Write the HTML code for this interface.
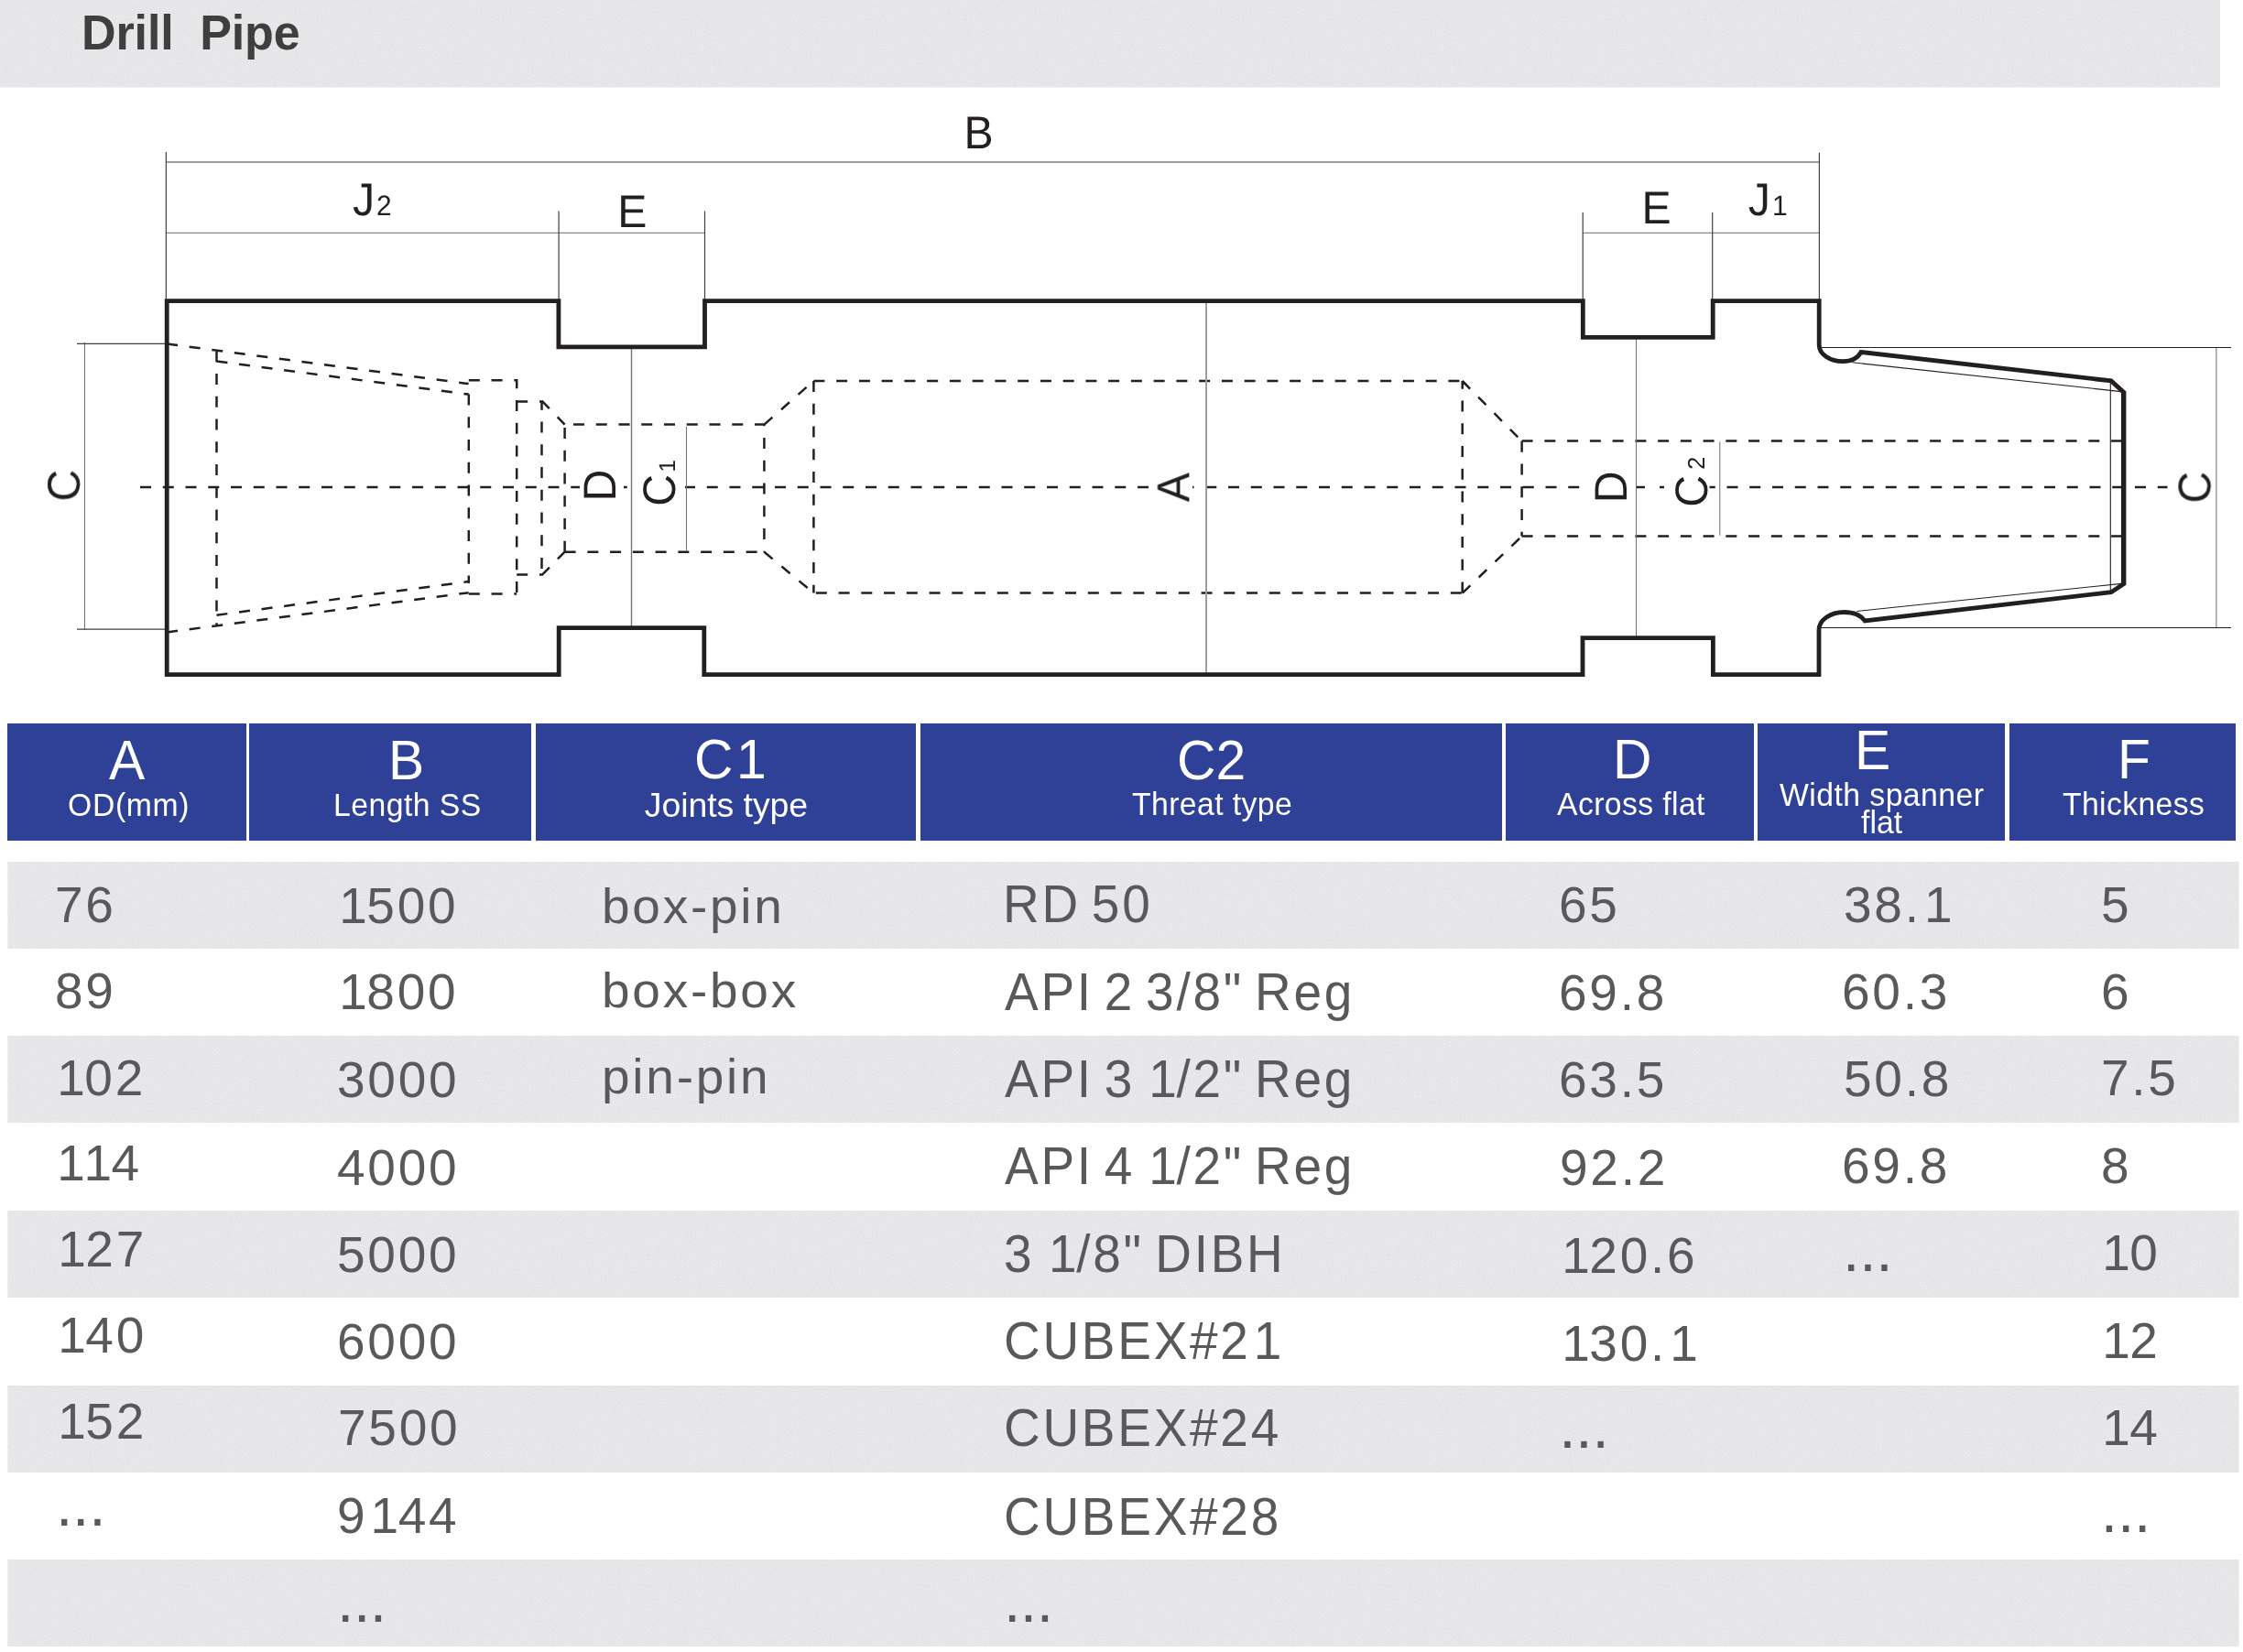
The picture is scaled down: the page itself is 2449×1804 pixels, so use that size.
<!DOCTYPE html>
<html lang="en"><head><meta charset="utf-8"><title>Drill Pipe</title>
<style>
html,body{margin:0;padding:0;background:#fff;width:2449px;height:1804px}
body{position:relative;font-family:"Liberation Sans",sans-serif;color:#58595b}
.t{position:absolute;line-height:1;white-space:pre;transform-origin:0 0}
.t i{font-style:normal;position:relative;left:.058em}
.band,.row{background:#e6e6e8}
.band{position:absolute;left:0;top:0;width:2424px;height:95px;border-bottom:1px solid #f3f3f4}
.hc{position:absolute;top:790px;height:128px;background:#2e4197}
.row{position:absolute;left:8px;width:2435px;border-left:1px solid #ededef;border-right:1px solid #f1f1f2}
svg{position:absolute;left:0;top:0}
svg text{font-family:"Liberation Sans",sans-serif;fill:#231f20;text-rendering:geometricPrecision}
.k{fill:none;stroke:#231f20;stroke-width:4.8;stroke-linejoin:miter;stroke-miterlimit:10}
.d{fill:none;stroke:#231f20;stroke-width:2.5;stroke-dasharray:12 12.75}
.g1{fill:none;stroke:#9c9ea2;stroke-width:2}
.g2{fill:none;stroke:#737373;stroke-width:1.05}
.gb{fill:none;stroke:#868a96;stroke-width:1.25}
.g3{fill:none;stroke:#414042;stroke-width:1.2}
.n{fill:none;stroke:#231f20;stroke-width:1.1}
#sheet{position:absolute;left:0;top:0;width:2449px;height:1804px;overflow:hidden;opacity:.999}
</style></head><body><div id="sheet">
<div class="band"></div>

<div class="row" style="top:941px;height:95.0px"></div>
<div class="row" style="top:1131px;height:95.0px"></div>
<div class="row" style="top:1322px;height:95.0px"></div>
<div class="row" style="top:1513px;height:95.0px"></div>
<div class="row" style="top:1703px;height:95.0px"></div>
<svg width="2449" height="1804" viewBox="0 0 2449 1804" shape-rendering="crispEdges"><defs><pattern id="dots" width="101" height="101" patternUnits="userSpaceOnUse"><g fill="#f0f0f1"><path d="M57,71h1v1h-1zM99,59h1v1h-1zM57,65h1v1h-1zM75,24h1v1h-1zM23,65h1v1h-1zM60,80h1v1h-1zM78,23h1v1h-1zM12,57h1v1h-1zM38,18h1v1h-1zM11,68h1v1h-1zM88,81h1v1h-1zM5,76h1v1h-1zM50,57h1v1h-1zM83,94h1v1h-1zM78,83h1v1h-1zM20,79h1v1h-1zM1,67h1v1h-1zM8,7h1v1h-1zM4,24h1v1h-1zM30,76h1v1h-1zM3,99h1v1h-1zM59,41h1v1h-1zM56,75h1v1h-1zM29,81h1v1h-1zM37,63h1v1h-1zM0,84h1v1h-1zM83,35h1v1h-1zM52,70h1v1h-1zM10,90h1v1h-1zM32,40h1v1h-1zM97,29h1v1h-1zM65,36h1v1h-1zM3,8h1v1h-1zM72,98h1v1h-1zM13,51h1v1h-1zM13,37h1v1h-1zM49,8h1v1h-1zM2,87h1v1h-1zM0,27h1v1h-1zM26,6h1v1h-1zM60,48h1v1h-1zM90,50h1v1h-1zM53,9h1v1h-1zM72,80h1v1h-1zM25,99h1v1h-1zM86,34h1v1h-1zM43,11h1v1h-1zM39,42h1v1h-1zM1,52h1v1h-1zM97,15h1v1h-1zM17,31h1v1h-1zM90,12h1v1h-1zM59,62h1v1h-1zM22,87h1v1h-1zM71,24h1v1h-1zM24,93h1v1h-1zM53,82h1v1h-1zM49,14h1v1h-1zM50,53h1v1h-1zM27,0h1v1h-1zM34,75h1v1h-1zM38,2h1v1h-1zM26,23h1v1h-1zM50,77h1v1h-1zM82,73h1v1h-1zM12,5h1v1h-1zM18,27h1v1h-1zM56,33h1v1h-1zM78,42h1v1h-1zM37,49h1v1h-1zM11,26h1v1h-1zM31,1h1v1h-1zM76,47h1v1h-1zM47,79h1v1h-1zM58,16h1v1h-1zM75,61h1v1h-1zM73,17h1v1h-1zM49,23h1v1h-1zM80,19h1v1h-1zM39,29h1v1h-1zM78,31h1v1h-1zM92,24h1v1h-1zM20,94h1v1h-1zM80,70h1v1h-1zM25,87h1v1h-1zM49,61h1v1h-1zM77,10h1v1h-1zM53,6h1v1h-1zM13,13h1v1h-1zM4,65h1v1h-1zM32,30h1v1h-1zM94,90h1v1h-1zM50,32h1v1h-1zM53,76h1v1h-1zM62,37h1v1h-1zM66,22h1v1h-1zM92,8h1v1h-1zM61,71h1v1h-1zM83,78h1v1h-1zM35,27h1v1h-1zM26,95h1v1h-1zM34,52h1v1h-1zM22,36h1v1h-1zM47,67h1v1h-1zM11,46h1v1h-1zM17,57h1v1h-1zM42,84h1v1h-1zM66,74h1v1h-1zM17,75h1v1h-1zM4,2h1v1h-1zM60,45h1v1h-1zM89,39h1v1h-1zM76,81h1v1h-1zM9,61h1v1h-1zM8,93h1v1h-1zM17,9h1v1h-1zM9,57h1v1h-1zM69,47h1v1h-1zM94,5h1v1h-1zM94,94h1v1h-1zM90,16h1v1h-1zM43,45h1v1h-1zM10,87h1v1h-1zM60,9h1v1h-1zM53,3h1v1h-1zM63,73h1v1h-1zM1,79h1v1h-1zM84,48h1v1h-1zM48,74h1v1h-1zM9,10h1v1h-1zM11,81h1v1h-1zM14,32h1v1h-1zM53,93h1v1h-1zM42,49h1v1h-1zM74,58h1v1h-1zM56,59h1v1h-1zM69,10h1v1h-1zM66,96h1v1h-1zM65,3h1v1h-1zM39,76h1v1h-1zM2,29h1v1h-1zM63,99h1v1h-1zM62,32h1v1h-1zM1,47h1v1h-1zM86,78h1v1h-1zM51,85h1v1h-1zM32,25h1v1h-1zM81,55h1v1h-1zM96,25h1v1h-1zM27,49h1v1h-1zM28,74h1v1h-1zM40,26h1v1h-1zM17,17h1v1h-1zM63,44h1v1h-1zM5,91h1v1h-1zM8,35h1v1h-1zM21,14h1v1h-1zM52,48h1v1h-1zM80,66h1v1h-1zM63,86h1v1h-1zM40,91h1v1h-1zM79,57h1v1h-1zM41,9h1v1h-1zM4,35h1v1h-1zM77,5h1v1h-1zM86,90h1v1h-1zM45,39h1v1h-1zM2,82h1v1h-1zM17,51h1v1h-1zM58,24h1v1h-1zM99,18h1v1h-1zM6,80h1v1h-1zM68,83h1v1h-1zM81,47h1v1h-1zM22,91h1v1h-1zM1,96h1v1h-1zM60,68h1v1h-1zM91,4h1v1h-1zM22,28h1v1h-1zM34,99h1v1h-1zM44,69h1v1h-1zM89,66h1v1h-1zM64,78h1v1h-1zM96,20h1v1h-1zM50,89h1v1h-1zM28,11h1v1h-1zM25,80h1v1h-1zM70,72h1v1h-1zM83,64h1v1h-1zM43,59h1v1h-1zM92,82h1v1h-1zM27,31h1v1h-1zM49,11h1v1h-1zM39,68h1v1h-1zM41,33h1v1h-1zM44,64h1v1h-1zM56,43h1v1h-1zM70,53h1v1h-1zM98,35h1v1h-1zM62,3h1v1h-1zM22,68h1v1h-1zM42,87h1v1h-1zM60,19h1v1h-1zM66,92h1v1h-1zM66,86h1v1h-1zM88,56h1v1h-1zM71,37h1v1h-1zM93,71h1v1h-1zM66,65h1v1h-1zM71,32h1v1h-1zM39,85h1v1h-1zM26,38h1v1h-1zM18,69h1v1h-1zM67,34h1v1h-1zM73,63h1v1h-1zM25,52h1v1h-1zM68,14h1v1h-1zM62,11h1v1h-1zM88,21h1v1h-1zM8,68h1v1h-1zM58,52h1v1h-1zM31,60h1v1h-1zM63,16h1v1h-1zM43,55h1v1h-1zM40,13h1v1h-1zM79,3h1v1h-1zM33,16h1v1h-1zM89,99h1v1h-1zM2,4h1v1h-1zM24,19h1v1h-1zM45,31h1v1h-1zM79,63h1v1h-1zM13,63h1v1h-1zM93,74h1v1h-1zM15,65h1v1h-1zM52,67h1v1h-1zM68,26h1v1h-1zM81,27h1v1h-1zM69,78h1v1h-1zM29,94h1v1h-1zM80,44h1v1h-1zM23,40h1v1h-1zM99,24h1v1h-1zM12,17h1v1h-1zM30,16h1v1h-1zM93,11h1v1h-1zM33,49h1v1h-1zM80,87h1v1h-1zM2,12h1v1h-1zM25,72h1v1h-1zM87,45h1v1h-1zM46,14h1v1h-1zM81,97h1v1h-1zM87,24h1v1h-1zM14,26h1v1h-1zM36,86h1v1h-1zM12,74h1v1h-1zM7,17h1v1h-1zM87,59h1v1h-1zM9,97h1v1h-1zM12,41h1v1h-1zM54,65h1v1h-1zM26,76h1v1h-1zM47,1h1v1h-1zM94,47h1v1h-1zM1,41h1v1h-1zM80,51h1v1h-1zM72,76h1v1h-1zM74,43h1v1h-1zM35,14h1v1h-1zM51,17h1v1h-1zM98,55h1v1h-1zM51,26h1v1h-1zM9,43h1v1h-1zM38,60h1v1h-1zM12,1h1v1h-1zM45,81h1v1h-1zM29,34h1v1h-1zM85,38h1v1h-1zM43,27h1v1h-1zM84,51h1v1h-1zM49,65h1v1h-1zM63,82h1v1h-1zM27,89h1v1h-1zM15,97h1v1h-1zM78,13h1v1h-1zM94,30h1v1h-1zM32,56h1v1h-1zM6,97h1v1h-1zM32,35h1v1h-1zM69,65h1v1h-1zM72,12h1v1h-1zM82,9h1v1h-1zM85,97h1v1h-1zM5,49h1v1h-1zM20,49h1v1h-1zM63,69h1v1h-1zM78,76h1v1h-1zM7,54h1v1h-1zM63,53h1v1h-1zM36,67h1v1h-1zM39,46h1v1h-1zM34,71h1v1h-1zM91,95h1v1h-1zM20,52h1v1h-1zM96,87h1v1h-1zM40,95h1v1h-1zM74,92h1v1h-1zM28,54h1v1h-1zM92,61h1v1h-1zM32,96h1v1h-1zM31,5h1v1h-1zM66,12h1v1h-1zM77,90h1v1h-1zM46,56h1v1h-1zM17,85h1v1h-1zM53,58h1v1h-1zM76,33h1v1h-1zM87,53h1v1h-1zM46,99h1v1h-1zM95,67h1v1h-1zM17,37h1v1h-1zM93,16h1v1h-1zM39,100h1v1h-1zM45,35h1v1h-1zM34,78h1v1h-1zM72,89h1v1h-1zM24,31h1v1h-1zM7,1h1v1h-1zM34,33h1v1h-1zM26,43h1v1h-1zM9,15h1v1h-1zM57,79h1v1h-1zM98,98h1v1h-1zM19,83h1v1h-1zM37,70h1v1h-1zM97,95h1v1h-1zM23,54h1v1h-1zM59,38h1v1h-1zM99,1h1v1h-1zM9,39h1v1h-1zM27,84h1v1h-1zM63,92h1v1h-1zM41,36h1v1h-1zM45,84h1v1h-1zM92,41h1v1h-1zM76,87h1v1h-1zM35,56h1v1h-1zM67,39h1v1h-1zM31,10h1v1h-1zM46,46h1v1h-1zM74,49h1v1h-1zM72,47h1v1h-1zM49,69h1v1h-1zM22,11h1v1h-1zM28,66h1v1h-1zM20,72h1v1h-1zM8,74h1v1h-1zM100,69h1v1h-1zM83,18h1v1h-1zM12,95h1v1h-1zM31,91h1v1h-1zM28,62h1v1h-1zM43,97h1v1h-1zM17,63h1v1h-1zM90,79h1v1h-1zM5,52h1v1h-1zM44,0h1v1h-1zM90,1h1v1h-1zM48,87h1v1h-1zM37,35h1v1h-1zM58,2h1v1h-1zM4,40h1v1h-1zM23,45h1v1h-1zM76,65h1v1h-1zM96,39h1v1h-1zM70,61h1v1h-1zM33,62h1v1h-1zM51,43h1v1h-1zM84,70h1v1h-1zM98,11h1v1h-1zM61,28h1v1h-1zM27,17h1v1h-1zM66,99h1v1h-1zM7,84h1v1h-1zM91,53h1v1h-1zM77,20h1v1h-1zM53,20h1v1h-1zM98,41h1v1h-1zM66,16h1v1h-1zM79,34h1v1h-1zM66,68h1v1h-1zM22,0h1v1h-1zM61,88h1v1h-1zM56,26h1v1h-1zM4,69h1v1h-1zM63,20h1v1h-1zM39,51h1v1h-1zM9,71h1v1h-1zM8,46h1v1h-1zM17,13h1v1h-1zM95,100h1v1h-1zM15,83h1v1h-1zM48,91h1v1h-1zM30,37h1v1h-1zM58,98h1v1h-1zM1,92h1v1h-1zM69,95h1v1h-1zM96,50h1v1h-1zM71,85h1v1h-1zM11,32h1v1h-1zM24,25h1v1h-1zM80,90h1v1h-1zM22,23h1v1h-1zM4,59h1v1h-1zM55,52h1v1h-1zM52,79h1v1h-1zM100,31h1v1h-1zM56,13h1v1h-1zM20,32h1v1h-1zM29,45h1v1h-1zM91,90h1v1h-1zM84,25h1v1h-1zM53,89h1v1h-1zM42,42h1v1h-1zM34,59h1v1h-1zM30,72h1v1h-1zM69,69h1v1h-1zM71,8h1v1h-1zM42,76h1v1h-1zM0,36h1v1h-1zM76,70h1v1h-1zM20,25h1v1h-1zM4,18h1v1h-1zM67,49h1v1h-1zM15,72h1v1h-1zM42,6h1v1h-1zM82,100h1v1h-1zM85,100h1v1h-1zM13,60h1v1h-1zM44,52h1v1h-1zM52,96h1v1h-1zM52,55h1v1h-1zM42,67h1v1h-1zM66,55h1v1h-1zM37,92h1v1h-1zM75,8h1v1h-1zM64,50h1v1h-1zM67,30h1v1h-1zM93,85h1v1h-1zM37,31h1v1h-1zM93,38h1v1h-1zM22,8h1v1h-1zM18,45h1v1h-1zM88,74h1v1h-1zM88,7h1v1h-1zM2,22h1v1h-1zM25,34h1v1h-1zM30,64h1v1h-1zM84,67h1v1h-1zM38,23h1v1h-1zM85,28h1v1h-1zM67,5h1v1h-1zM0,76h1v1h-1zM75,36h1v1h-1zM54,72h1v1h-1zM11,21h1v1h-1zM36,96h1v1h-1zM19,4h1v1h-1zM96,74h1v1h-1zM63,7h1v1h-1zM76,99h1v1h-1zM14,77h1v1h-1zM55,30h1v1h-1zM85,56h1v1h-1zM92,33h1v1h-1zM14,22h1v1h-1zM79,94h1v1h-1zM31,20h1v1h-1zM46,89h1v1h-1zM62,96h1v1h-1zM95,58h1v1h-1zM30,52h1v1h-1zM60,54h1v1h-1zM9,4h1v1h-1zM78,27h1v1h-1zM51,74h1v1h-1zM94,43h1v1h-1zM6,27h1v1h-1zM70,20h1v1h-1zM60,57h1v1h-1zM6,88h1v1h-1zM35,46h1v1h-1zM33,65h1v1h-1zM83,91h1v1h-1zM46,17h1v1h-1zM98,66h1v1h-1zM85,7h1v1h-1zM16,4h1v1h-1zM57,85h1v1h-1zM66,45h1v1h-1zM44,78h1v1h-1zM95,80h1v1h-1zM84,85h1v1h-1zM54,15h1v1h-1zM90,35h1v1h-1zM28,20h1v1h-1zM19,61h1v1h-1zM89,70h1v1h-1zM15,46h1v1h-1zM8,51h1v1h-1zM34,6h1v1h-1zM60,92h1v1h-1zM4,44h1v1h-1zM33,85h1v1h-1zM23,82h1v1h-1zM78,53h1v1h-1zM57,48h1v1h-1zM49,4h1v1h-1zM46,60h1v1h-1zM88,42h1v1h-1zM33,44h1v1h-1zM20,20h1v1h-1zM88,62h1v1h-1zM47,53h1v1h-1zM13,90h1v1h-1zM52,61h1v1h-1zM81,32h1v1h-1zM16,79h1v1h-1zM1,60h1v1h-1zM17,34h1v1h-1zM53,32h1v1h-1zM86,17h1v1h-1zM6,20h1v1h-1zM42,3h1v1h-1zM27,69h1v1h-1zM56,22h1v1h-1zM19,41h1v1h-1zM35,41h1v1h-1zM61,25h1v1h-1zM85,10h1v1h-1zM17,100h1v1h-1zM71,50h1v1h-1zM35,24h1v1h-1zM22,3h1v1h-1zM45,3h1v1h-1zM96,71h1v1h-1zM65,59h1v1h-1zM61,51h1v1h-1zM29,41h1v1h-1zM83,41h1v1h-1zM75,13h1v1h-1zM52,99h1v1h-1zM41,23h1v1h-1zM99,45h1v1h-1zM67,1h1v1h-1zM81,84h1v1h-1zM48,82h1v1h-1zM15,94h1v1h-1zM88,95h1v1h-1zM64,29h1v1h-1zM57,36h1v1h-1zM41,19h1v1h-1zM68,59h1v1h-1zM96,62h1v1h-1zM14,29h1v1h-1zM8,23h1v1h-1zM71,56h1v1h-1zM53,23h1v1h-1zM78,49h1v1h-1zM80,40h1v1h-1zM78,79h1v1h-1zM91,46h1v1h-1zM36,10h1v1h-1zM58,28h1v1h-1zM28,57h1v1h-1zM53,35h1v1h-1zM46,21h1v1h-1zM69,89h1v1h-1zM14,7h1v1h-1zM100,94h1v1h-1zM75,52h1v1h-1zM59,6h1v1h-1zM72,67h1v1h-1zM53,38h1v1h-1zM33,68h1v1h-1zM49,45h1v1h-1zM70,41h1v1h-1zM46,76h1v1h-1zM6,11h1v1h-1zM12,10h1v1h-1zM48,96h1v1h-1zM56,40h1v1h-1zM39,88h1v1h-1zM4,55h1v1h-1zM63,63h1v1h-1zM13,70h1v1h-1zM1,44h1v1h-1zM87,49h1v1h-1zM44,93h1v1h-1zM5,32h1v1h-1zM8,32h1v1h-1zM91,27h1v1h-1zM23,96h1v1h-1zM45,72h1v1h-1zM74,21h1v1h-1zM93,20h1v1h-1zM39,6h1v1h-1zM95,9h1v1h-1zM34,19h1v1h-1zM38,38h1v1h-1zM50,1h1v1h-1zM86,83h1v1h-1zM73,2h1v1h-1zM29,8h1v1h-1zM86,4h1v1h-1zM45,8h1v1h-1zM18,91h1v1h-1zM23,74h1v1h-1zM86,64h1v1h-1zM42,81h1v1h-1zM62,59h1v1h-1zM74,78h1v1h-1zM69,75h1v1h-1zM42,62h1v1h-1zM29,86h1v1h-1zM65,71h1v1h-1zM36,81h1v1h-1zM81,61h1v1h-1zM56,6h1v1h-1zM54,45h1v1h-1zM87,31h1v1h-1zM35,38h1v1h-1zM85,20h1v1h-1zM23,78h1v1h-1zM0,72h1v1h-1zM29,29h1v1h-1zM34,88h1v1h-1zM15,54h1v1h-1zM98,7h1v1h-1zM82,5h1v1h-1zM83,30h1v1h-1zM75,40h1v1h-1zM81,15h1v1h-1zM92,65h1v1h-1zM57,55h1v1h-1zM11,78h1v1h-1zM48,28h1v1h-1zM50,38h1v1h-1zM90,87h1v1h-1zM63,41h1v1h-1zM100,39h1v1h-1zM56,100h1v1h-1zM70,28h1v1h-1zM62,76h1v1h-1zM58,11h1v1h-1zM74,83h1v1h-1zM1,18h1v1h-1zM81,23h1v1h-1zM3,94h1v1h-1zM78,0h1v1h-1zM30,48h1v1h-1zM6,14h1v1h-1zM26,64h1v1h-1zM1,63h1v1h-1zM16,24h1v1h-1zM24,57h1v1h-1zM25,9h1v1h-1zM72,95h1v1h-1zM16,20h1v1h-1zM97,32h1v1h-1zM73,73h1v1h-1zM61,22h1v1h-1zM40,71h1v1h-1zM20,65h1v1h-1zM47,49h1v1h-1zM1,0h1v1h-1zM20,17h1v1h-1zM6,42h1v1h-1zM70,4h1v1h-1z"/></g></pattern></defs><rect x="0" y="0" width="2424" height="95" fill="url(#dots)"/><rect x="8" y="941" width="2436" height="95" fill="url(#dots)"/><rect x="8" y="1131" width="2436" height="95" fill="url(#dots)"/><rect x="8" y="1322" width="2436" height="95" fill="url(#dots)"/><rect x="8" y="1513" width="2436" height="95" fill="url(#dots)"/><rect x="8" y="1703" width="2436" height="95" fill="url(#dots)"/></svg>
<span class="t" style="left:88.61px;top:8.30px;font-size:54px;letter-spacing:-0.146px;transform:scaleX(0.9640);font-weight:bold;color:#413e3f;">Drill  Pipe</span>
<svg width="2449" height="780" viewBox="0 0 2449 780">
<path class="d" d="M153,531.9H2366.5M182.2,375.4L511.6,419.1M182.2,690.4L511.6,647.2M236.5,394.5L511.6,430.6M236.5,671.7L511.6,635.1M236.5,383.2V684M511.8,430.6V637M511.8,415.2H564.2V648.4M511.8,648.4H564.2M564.2,438.4H591.5V628.1M564.2,627.6H591.5M591.5,437.6L616.6,463.6M591.5,628.1L616.6,602.7M616.6,602.7V463.6H834.4V602.7M616.6,602.7H834.4M834.4,463.6L888.4,416M834.4,602.7L888.4,647.6M888.4,416V647.6M888.4,416H1596.7M1596.7,647.6V416M890.8,647.6H1596.7M1596.7,416L1661.6,481.8M1596.7,647.6L1661.6,585.6M1661.6,481.7V585.6M1661.6,481.6H2316M1661.6,585.5H2316"/>
<rect x="633" y="528" width="48" height="8" fill="#fff"/>
<rect x="687.5" y="528" width="60.5" height="8" fill="#fff"/>
<rect x="1256" y="528" width="46" height="8" fill="#fff"/>
<rect x="1305.5" y="528" width="10.799999999999955" height="8" fill="#fff"/>
<rect x="1729" y="528" width="56.5" height="8" fill="#fff"/>
<rect x="1796" y="528" width="16" height="8" fill="#fff"/>
<rect x="1817" y="528" width="49.5" height="8" fill="#fff"/>
<path class="g1" d="M181.3,177H1986.4M1317,331V734.5"/>
<path class="gb" d="M181.3,254.45H769M1728,254.45H1986M1877.75,482.6V584.8M2419.85,379.5V685.4"/>
<path class="g2" d="M749.5,465.7V601.6M1786.5,368.3V696.6M92.45,373.8V688"/>
<path class="g2" style="stroke-width:1.4" d="M689.5,379V686"/>
<path class="g3" d="M181.35,166.1V327M610.1,230.4V327M769.5,230.4V327M1728.2,232V327M1869.7,232V327M1986.4,166.7V327M84,375.45H181M84,687.2H181"/>
<path class="n" d="M1986,379.45H2436M1986,685.45H2436M2022.4,395.8L2316,427.6M2027.3,667.5L2316,637.4M2304.3,416V647M2316.5,428V637.5"/>
<path class="k" d="M182.2,328.7H609.9V378.9H769.5V328.7H1728.3V368.3H1870.2V328.7H1986.2V376.5C1986.2,387 1998,394.7 2012.2,394.7C2021.5,394.7 2028.5,391 2032,384.5L2305,415.9L2319,428.6V637.4L2305,646.7L2036.1,678C2032,672 2023.5,668.5 2013.5,668.5C1998.3,668.5 1986,677 1986,688V736.6H1870.4V696.6H1728V736.6H768.8V685.6H610.2V736.6H182.2Z"/>
<text transform="translate(1052.44,162.20) scale(0.964,1)" font-size="50">B</text>
<text transform="translate(385.00,234.90) scale(0.964,1)" font-size="50">J</text>
<text transform="translate(411.04,234.90) scale(0.964,1)" font-size="31">2</text>
<text transform="translate(674.14,248.30) scale(0.964,1)" font-size="50">E</text>
<text transform="translate(1792.54,243.80) scale(0.964,1)" font-size="50">E</text>
<text transform="translate(1908.80,234.70) scale(0.964,1)" font-size="50">J</text>
<text transform="translate(1934.97,234.70) scale(0.964,1)" font-size="31">1</text>
<text transform="translate(86.90,547.53) rotate(-90) scale(0.964,1)" font-size="50">C</text>
<text transform="translate(672.10,547.57) rotate(-90) scale(0.964,1)" font-size="50">D</text>
<text transform="translate(737.25,552.73) rotate(-90) scale(0.964,1)" font-size="50">C</text>
<text transform="translate(736.70,515.55) rotate(-90) scale(0.964,1)" font-size="25">1</text>
<text transform="translate(1298.40,548.24) rotate(-90) scale(0.964,1)" font-size="50">A</text>
<text transform="translate(1776.10,549.22) rotate(-90) scale(0.964,1)" font-size="50">D</text>
<text transform="translate(1864.40,553.63) rotate(-90) scale(0.964,1)" font-size="50">C</text>
<text transform="translate(1861.45,512.83) rotate(-90) scale(0.964,1)" font-size="26">2</text>
<text transform="translate(2413.40,549.58) rotate(-90) scale(0.964,1)" font-size="50">C</text>
</svg>
<div class="hc" style="left:8px;width:261.0px"></div>
<div class="hc" style="left:272px;width:308.0px"></div>
<div class="hc" style="left:585px;width:415.0px"></div>
<div class="hc" style="left:1005px;width:635.0px"></div>
<div class="hc" style="left:1644px;width:271.0px"></div>
<div class="hc" style="left:1919px;width:270.0px"></div>
<div class="hc" style="left:2194px;width:247.0px"></div>
<span class="t" style="left:119.40px;top:799.70px;font-size:61px;transform:scaleX(0.9640);color:#fff;">A</span>
<span class="t" style="left:73.64px;top:860.50px;font-size:35px;letter-spacing:0.657px;transform:scaleX(0.9640);color:#fff;">OD(mm)</span>
<span class="t" style="left:423.58px;top:799.70px;font-size:61px;transform:scaleX(0.9640);color:#fff;">B</span>
<span class="t" style="left:364.27px;top:860.50px;font-size:35px;letter-spacing:0.486px;transform:scaleX(0.9640);color:#fff;">Length SS</span>
<span class="t" style="left:758.11px;top:799.40px;font-size:61px;transform:scaleX(0.9640);color:#fff;">C<i>1</i></span>
<span class="t" style="left:703.80px;top:860.60px;font-size:37.5px;letter-spacing:-0.090px;color:#fff;">Joints type</span>
<span class="t" style="left:1284.61px;top:799.70px;font-size:61px;transform:scaleX(0.9640);color:#fff;">C2</span>
<span class="t" style="left:1236.30px;top:859.70px;font-size:35px;letter-spacing:0.420px;transform:scaleX(0.9640);color:#fff;">Threat type</span>
<span class="t" style="left:1760.58px;top:798.90px;font-size:61px;transform:scaleX(0.9640);color:#fff;">D</span>
<span class="t" style="left:1699.50px;top:859.90px;font-size:35px;letter-spacing:0.408px;transform:scaleX(0.9640);color:#fff;">Across flat</span>
<span class="t" style="left:2024.78px;top:789.30px;font-size:61px;transform:scaleX(0.9640);color:#fff;">E</span>
<span class="t" style="left:1943.30px;top:849.70px;font-size:35px;letter-spacing:0.469px;transform:scaleX(0.9640);color:#fff;">Width spanner</span>
<span class="t" style="left:2031.50px;top:880.30px;font-size:35px;letter-spacing:0.043px;transform:scaleX(0.9640);color:#fff;">flat</span>
<span class="t" style="left:2311.68px;top:798.90px;font-size:61px;transform:scaleX(0.9640);color:#fff;">F</span>
<span class="t" style="left:2251.80px;top:859.90px;font-size:35px;letter-spacing:0.389px;transform:scaleX(0.9640);color:#fff;">Thickness</span>
<span class="t" style="left:60.44px;top:960.40px;font-size:56.25px;letter-spacing:2.812px;transform:scaleX(0.9778);">76</span>
<span class="t" style="left:60.44px;top:1054.00px;font-size:56.25px;letter-spacing:2.812px;transform:scaleX(0.9778);">89</span>
<span class="t" style="left:59.49px;top:1148.60px;font-size:56.25px;letter-spacing:2.812px;transform:scaleX(0.9778);"><i>1</i>02</span>
<span class="t" style="left:59.49px;top:1242.20px;font-size:56.25px;letter-spacing:2.812px;transform:scaleX(0.9778);"><i>1</i><i>1</i>4</span>
<span class="t" style="left:59.99px;top:1336.30px;font-size:56.25px;letter-spacing:2.812px;transform:scaleX(0.9778);"><i>1</i>27</span>
<span class="t" style="left:60.09px;top:1429.90px;font-size:56.25px;letter-spacing:2.812px;transform:scaleX(0.9778);"><i>1</i>40</span>
<span class="t" style="left:60.09px;top:1524.30px;font-size:56.25px;letter-spacing:2.812px;transform:scaleX(0.9778);"><i>1</i>52</span>
<span class="t" style="left:60.90px;top:1609.80px;font-size:66px;letter-spacing:-0.187px;">...</span>
<span class="t" style="left:366.99px;top:961.30px;font-size:56.25px;letter-spacing:2.812px;transform:scaleX(0.9778);"><i>1</i>500</span>
<span class="t" style="left:366.99px;top:1055.00px;font-size:56.25px;letter-spacing:2.812px;transform:scaleX(0.9778);"><i>1</i>800</span>
<span class="t" style="left:367.94px;top:1150.80px;font-size:56.25px;letter-spacing:2.812px;transform:scaleX(0.9778);">3000</span>
<span class="t" style="left:368.02px;top:1246.60px;font-size:56.25px;letter-spacing:2.812px;transform:scaleX(0.9778);">4000</span>
<span class="t" style="left:368.04px;top:1341.60px;font-size:56.25px;letter-spacing:2.812px;transform:scaleX(0.9778);">5000</span>
<span class="t" style="left:368.04px;top:1436.60px;font-size:56.25px;letter-spacing:2.812px;transform:scaleX(0.9778);">6000</span>
<span class="t" style="left:368.54px;top:1531.00px;font-size:56.25px;letter-spacing:2.812px;transform:scaleX(0.9778);">7500</span>
<span class="t" style="left:368.04px;top:1627.30px;font-size:56.25px;letter-spacing:2.812px;transform:scaleX(0.9778);">9<i>1</i>44</span>
<span class="t" style="left:368.00px;top:1714.60px;font-size:66px;letter-spacing:-0.437px;">...</span>
<span class="t" style="left:657.14px;top:961.60px;font-size:54px;letter-spacing:2.700px;transform:scaleX(1.0185);">box-pin</span>
<span class="t" style="left:657.14px;top:1053.90px;font-size:54px;letter-spacing:2.700px;transform:scaleX(1.0185);">box-box</span>
<span class="t" style="left:657.14px;top:1147.50px;font-size:54px;letter-spacing:2.700px;transform:scaleX(1.0185);">pin-pin</span>
<span class="t" style="left:1094.84px;top:959.00px;font-size:57px;letter-spacing:2.853px;word-spacing:-6.279px;transform:scaleX(0.9640);">RD 50</span>
<span class="t" style="left:1096.60px;top:1054.60px;font-size:57px;letter-spacing:2.853px;word-spacing:-6.246px;transform:scaleX(0.9640);">API 2 3/8&quot; Reg</span>
<span class="t" style="left:1096.60px;top:1149.50px;font-size:57px;letter-spacing:2.853px;word-spacing:-6.246px;transform:scaleX(0.9640);">API 3 <i>1</i>/2&quot; Reg</span>
<span class="t" style="left:1096.60px;top:1245.30px;font-size:57px;letter-spacing:2.853px;word-spacing:-6.246px;transform:scaleX(0.9640);">API 4 <i>1</i>/2&quot; Reg</span>
<span class="t" style="left:1096.27px;top:1340.60px;font-size:57px;letter-spacing:2.853px;word-spacing:-5.716px;transform:scaleX(0.9640);">3 <i>1</i>/8&quot; DIBH</span>
<span class="t" style="left:1096.27px;top:1436.40px;font-size:57px;letter-spacing:2.853px;transform:scaleX(0.9640);">CUBEX#2<i>1</i></span>
<span class="t" style="left:1096.27px;top:1531.40px;font-size:57px;letter-spacing:2.853px;transform:scaleX(0.9640);">CUBEX#24</span>
<span class="t" style="left:1096.27px;top:1627.70px;font-size:57px;letter-spacing:2.853px;transform:scaleX(0.9640);">CUBEX#28</span>
<span class="t" style="left:1095.90px;top:1714.60px;font-size:66px;letter-spacing:-0.437px;">...</span>
<span class="t" style="left:1702.14px;top:960.00px;font-size:56.25px;letter-spacing:2.812px;transform:scaleX(0.9778);">65</span>
<span class="t" style="left:1702.14px;top:1055.60px;font-size:56.25px;letter-spacing:2.812px;transform:scaleX(0.9778);">69.8</span>
<span class="t" style="left:1702.14px;top:1150.50px;font-size:56.25px;letter-spacing:2.812px;transform:scaleX(0.9778);">63.5</span>
<span class="t" style="left:1703.04px;top:1246.80px;font-size:56.25px;letter-spacing:2.812px;transform:scaleX(0.9778);">92.2</span>
<span class="t" style="left:1701.59px;top:1343.00px;font-size:56.25px;letter-spacing:2.812px;transform:scaleX(0.9778);"><i>1</i>20.6</span>
<span class="t" style="left:1701.59px;top:1438.70px;font-size:56.25px;letter-spacing:2.812px;transform:scaleX(0.9778);"><i>1</i>30.<i>1</i></span>
<span class="t" style="left:1702.20px;top:1525.20px;font-size:66px;letter-spacing:-0.187px;">...</span>
<span class="t" style="left:2012.54px;top:960.00px;font-size:56.25px;letter-spacing:2.812px;transform:scaleX(0.9778);">38.<i>1</i></span>
<span class="t" style="left:2011.14px;top:1055.00px;font-size:56.25px;letter-spacing:2.812px;transform:scaleX(0.9778);">60.3</span>
<span class="t" style="left:2012.54px;top:1149.70px;font-size:56.25px;letter-spacing:2.812px;transform:scaleX(0.9778);">50.8</span>
<span class="t" style="left:2011.14px;top:1244.70px;font-size:56.25px;letter-spacing:2.812px;transform:scaleX(0.9778);">69.8</span>
<span class="t" style="left:2012.00px;top:1332.00px;font-size:66px;letter-spacing:-0.187px;">...</span>
<span class="t" style="left:2293.54px;top:959.70px;font-size:56.25px;transform:scaleX(0.9778);">5</span>
<span class="t" style="left:2293.54px;top:1055.00px;font-size:56.25px;transform:scaleX(0.9778);">6</span>
<span class="t" style="left:2293.54px;top:1149.10px;font-size:56.25px;letter-spacing:2.812px;transform:scaleX(0.9778);">7.5</span>
<span class="t" style="left:2293.54px;top:1245.40px;font-size:56.25px;transform:scaleX(0.9778);">8</span>
<span class="t" style="left:2291.99px;top:1339.60px;font-size:56.25px;letter-spacing:2.812px;transform:scaleX(0.9778);"><i>1</i>0</span>
<span class="t" style="left:2291.99px;top:1435.90px;font-size:56.25px;letter-spacing:2.812px;transform:scaleX(0.9778);"><i>1</i>2</span>
<span class="t" style="left:2291.99px;top:1531.10px;font-size:56.25px;letter-spacing:2.812px;transform:scaleX(0.9778);"><i>1</i>4</span>
<span class="t" style="left:2293.70px;top:1617.40px;font-size:66px;letter-spacing:-0.137px;">...</span>
</div></body></html>
